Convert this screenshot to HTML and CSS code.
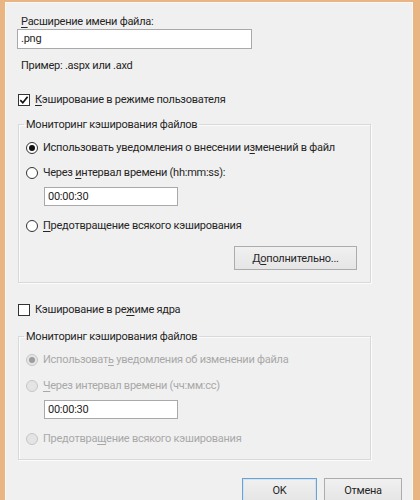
FILE: index.html
```html
<!DOCTYPE html>
<html lang="ru">
<head>
<meta charset="utf-8">
<title>Кэширование</title>
<link rel="stylesheet" href="styles.css">
</head>
<body>
<div class="window">
  <div class="content">
    <div class="field-label"><u>Р</u>асширение имени файла:</div>
    <div class="textbox wide">.png</div>
    <div class="hint">Пример: .aspx или .axd</div>

    <div class="check-row first-check">
      <span class="checkbox"><svg width="12" height="12" viewBox="0 0 12 12"><path d="M2.3 6.2 L4.8 8.8 L9.6 2.8" fill="none" stroke="#111" stroke-width="1.7"/></svg></span>
      <span><u>К</u>эширование в режиме пользователя</span>
    </div>

    <fieldset class="group group-user">
      <legend>Мониторинг кэширования файлов</legend>
      <div class="radio-row r1"><span class="radio checked"></span><span>Использовать уведомления о внесении и<u>з</u>менений в файл</span></div>
      <div class="radio-row r2"><span class="radio"></span><span>Через <u>и</u>нтервал времени (hh:mm:ss):</span></div>
      <div class="textbox small">00:00:30</div>
      <div class="radio-row r3"><span class="radio"></span><span><u>П</u>редотвращение всякого кэширования</span></div>
      <div class="btn-line"><span class="button more">Д<u>о</u>полнительно...</span></div>
    </fieldset>

    <div class="check-row second-check">
      <span class="checkbox"></span>
      <span>Кэширование в ре<u>ж</u>име ядра</span>
    </div>

    <fieldset class="group group-kernel">
      <legend>Мониторинг кэширования файлов</legend>
      <div class="radio-row r1 disabled"><span class="radio checked"></span><span>Использоват<u>ь</u> уведомления об изменении файла</span></div>
      <div class="radio-row r2 disabled"><span class="radio"></span><span><u>Ч</u>ерез интервал времени (чч:мм:сс)</span></div>
      <div class="textbox small">00:00:30</div>
      <div class="radio-row r3 disabled"><span class="radio"></span><span>Предотвра<u>щ</u>ение всякого кэширования</span></div>
    </fieldset>

    <div class="dialog-buttons">
      <span class="button ok">OK</span>
      <span class="button cancel">Отмена</span>
    </div>
  </div>
</div>
</body>
</html>
```

FILE: styles.css
```css
html, body {
  margin: 0;
  padding: 0;
  height: 100%;
  overflow: hidden;
}
body {
  font-family: Roboto, "Noto Sans", sans-serif;
  font-size: 11px;
  letter-spacing: -0.25px;
  line-height: 15px;
  color: #262626;
  background: #e9b582;
}
.window {
  height: 500px;
  box-sizing: border-box;
  border-left: 5px solid #e9b582;
  border-right: 7px solid #e9b582;
  border-top: 2px solid #e9b582;
  background: #f0f0f0;
  box-shadow: inset 1px 1px 0 #fbf7f2, inset -1px 0 0 #fbf7f2;
}
.content {
  padding: 13px 11px 0 13px;
  display: flex;
  flex-direction: column;
  align-items: flex-start;
}
u {
  text-decoration: underline;
  text-underline-offset: 2px;
  text-decoration-thickness: 1px;
}
.field-label {
  line-height: 14px;
  margin-left: 3px;
}
.textbox {
  box-sizing: border-box;
  background: #fff;
  border: 1px solid #a9a9a9;
  padding: 0 3px;
  color: #262626;
  white-space: nowrap;
}
.textbox.wide {
  width: 235px;
  height: 20px;
  line-height: 18px;
  margin-left: -1px;
}
.textbox.small {
  width: 134px;
  height: 19px;
  line-height: 17px;
  margin-top: 7px;
  margin-left: 17px;
}
.hint {
  margin-top: 9px;
  margin-left: 3px;
}
.check-row, .radio-row {
  display: flex;
  align-items: center;
  gap: 5px;
  height: 15px;
  white-space: nowrap;
}
.first-check { margin-top: 19px; }
.second-check { margin-top: 19px; }
.checkbox {
  box-sizing: border-box;
  width: 12px;
  height: 12px;
  border: 1px solid #333;
  background: #fff;
  display: flex;
  align-items: center;
  justify-content: center;
}
.checkbox svg {
  display: block;
  margin: -1px;
}
.group {
  box-sizing: border-box;
  width: 353px;
  margin: 10px 0 0 0;
  padding: 0 13px 12px 8px;
  border: 1px solid #d9d9d9;
  box-shadow: 1px 1px 0 #fbfbfb, inset 1px 1px 0 #fbfbfb;
  display: flex;
  flex-direction: column;
  align-items: flex-start;
  min-inline-size: 0;
}
.group legend {
  padding: 0 2px;
  margin-left: -3px;
  line-height: 15px;
}
.group-kernel {
  margin-top: 12px;
  padding-bottom: 13px;
}
.radio-row.r1 { margin-top: 8px; }
.radio-row.r2 { margin-top: 10px; }
.radio-row.r3 { margin-top: 12px; }
.group-kernel .radio-row.r2 { margin-top: 11px; }
.radio {
  box-sizing: border-box;
  width: 12px;
  height: 12px;
  border: 1px solid #333;
  border-radius: 50%;
  background: #fff;
  display: flex;
  align-items: center;
  justify-content: center;
  margin-left: -1px;
}
.radio.checked::after {
  content: "";
  width: 6px;
  height: 6px;
  border-radius: 50%;
  background: #111;
}
.disabled { color: #a8a8a8; }
.disabled .radio {
  border-color: #c6c6c6;
  background: #e4e4e4;
}
.disabled .radio.checked::after { background: #9d9d9d; }
.btn-line {
  align-self: stretch;
  display: flex;
  justify-content: flex-end;
  margin-top: 13px;
}
.button {
  box-sizing: border-box;
  height: 24px;
  display: flex;
  align-items: center;
  justify-content: center;
  border: 1px solid #acacac;
  background: linear-gradient(#f0f0f0, #e5e5e5);
  color: #262626;
}
.button.more { width: 123px; }
.dialog-buttons {
  align-self: stretch;
  display: flex;
  justify-content: flex-end;
  gap: 7px;
  margin-top: 18px;
}
.button.ok {
  width: 75px;
  border-color: #6fa1cf;
  box-shadow: inset 0 0 0 1px #cfe3f5;
}
.button.cancel { width: 78px; }
```
